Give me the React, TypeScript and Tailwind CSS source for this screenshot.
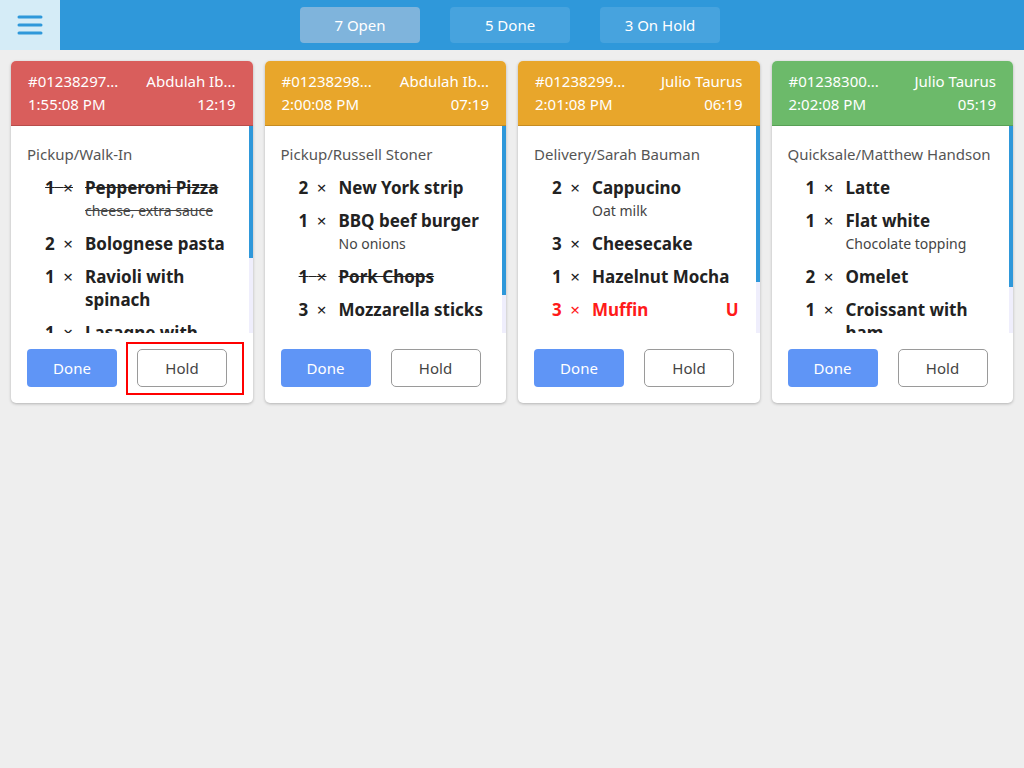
import type { ReactNode } from 'react';

type Item = {
  qty: number;
  name: string;
  note?: string;
  done?: boolean;
  urgent?: boolean;
};

type Order = {
  id: string;
  customer: string;
  time: string;
  elapsed: string;
  color: string;
  source: string;
  thumb: number;
  items: Item[];
};

const orders: Order[] = [
  {
    id: '#01238297...',
    customer: 'Abdulah Ib...',
    time: '1:55:08 PM',
    elapsed: '12:19',
    color: 'bg-[#d95e5c] border-[#b84d4b]',
    source: 'Pickup/Walk-In',
    thumb: 132,
    items: [
      { qty: 1, name: 'Pepperoni Pizza', note: 'cheese, extra sauce', done: true },
      { qty: 2, name: 'Bolognese pasta' },
      { qty: 1, name: 'Ravioli with spinach' },
      { qty: 1, name: 'Lasagne with beef' },
    ],
  },
  {
    id: '#01238298...',
    customer: 'Abdulah Ib...',
    time: '2:00:08 PM',
    elapsed: '07:19',
    color: 'bg-[#e8a62b] border-[#c68c22]',
    source: 'Pickup/Russell Stoner',
    thumb: 169,
    items: [
      { qty: 2, name: 'New York strip' },
      { qty: 1, name: 'BBQ beef burger', note: 'No onions' },
      { qty: 1, name: 'Pork Chops', done: true },
      { qty: 3, name: 'Mozzarella sticks' },
    ],
  },
  {
    id: '#01238299...',
    customer: 'Julio Taurus',
    time: '2:01:08 PM',
    elapsed: '06:19',
    color: 'bg-[#e8a62b] border-[#c68c22]',
    source: 'Delivery/Sarah Bauman',
    thumb: 156,
    items: [
      { qty: 2, name: 'Cappucino', note: 'Oat milk' },
      { qty: 3, name: 'Cheesecake' },
      { qty: 1, name: 'Hazelnut Mocha' },
      { qty: 3, name: 'Muffin', urgent: true },
    ],
  },
  {
    id: '#01238300...',
    customer: 'Julio Taurus',
    time: '2:02:08 PM',
    elapsed: '05:19',
    color: 'bg-[#6cba6a] border-[#58a056]',
    source: 'Quicksale/Matthew Handson',
    thumb: 161,
    items: [
      { qty: 1, name: 'Latte' },
      { qty: 1, name: 'Flat white', note: 'Chocolate topping' },
      { qty: 2, name: 'Omelet' },
      { qty: 1, name: 'Croissant with ham' },
    ],
  },
];

function Tab({ children, active }: { children: ReactNode; active?: boolean }) {
  return (
    <button
      className={`h-9 w-[120px] rounded-[4px] text-[15px] text-white ${
        active ? 'bg-[#7fb4dc]' : 'bg-[#47a3de]'
      }`}
    >
      {children}
    </button>
  );
}

function OrderCard({ order, highlightHold }: { order: Order; highlightHold?: boolean }) {
  return (
    <div className="flex flex-col overflow-hidden rounded-[5px] bg-white shadow-[0_1px_3px_rgba(0,0,0,0.25)]">
      <div className={`border-b px-[17px] pt-[9px] pb-[9px] text-[15px] leading-[23px] text-white ${order.color}`}>
        <div className="flex justify-between">
          <span>{order.id}</span>
          <span>{order.customer}</span>
        </div>
        <div className="flex justify-between">
          <span>{order.time}</span>
          <span>{order.elapsed}</span>
        </div>
      </div>

      <div className="relative h-[207px] overflow-hidden pl-4 pr-[21px] pt-[17px]">
        <div className="text-[15px] leading-[23px] text-[#555]">{order.source}</div>
        <div className="pt-[5px] pb-2">
          {order.items.map((item, i) => (
            <div
              key={i}
              className={`flex py-[5px] text-[17px] leading-[23px] font-bold ${
                item.urgent ? 'text-[#ff1a1a]' : 'text-[#222]'
              }`}
            >
              <div
                className={`w-[46px] shrink-0 text-right [word-spacing:4px] ${item.done ? 'line-through' : ''}`}
              >
                {item.qty} <span className="font-normal">×</span>
              </div>
              <div className="ml-3 min-w-0 flex-1">
                <div className={item.done ? 'line-through' : ''}>{item.name}</div>
                {item.note && (
                  <div className={`text-[14px] font-normal text-[#444] ${item.done ? 'line-through' : ''}`}>
                    {item.note}
                  </div>
                )}
              </div>
              {item.urgent && <div className="pl-2">U</div>}
            </div>
          ))}
        </div>
        {/* scrollbar */}
        <div className="absolute top-0 right-0 bottom-0 w-[4px] bg-[#efeefc]">
          <div className="w-full bg-[#2f98da]" style={{ height: order.thumb }} />
        </div>
      </div>

      <div className="flex gap-5 px-4 py-4">
        <button className="h-[38px] w-[90px] rounded-[4px] bg-[#5f95f6] text-[15px] text-white">Done</button>
        <div className="relative">
          <button className="h-[38px] w-[90px] rounded-[5px] border border-[#9a9a9a] bg-white text-[15px] text-[#444]">
            Hold
          </button>
          {highlightHold && (
            <div className="pointer-events-none absolute -top-[7px] -bottom-[8px] -left-[11px] -right-[17px] border-2 border-[#ff0000]" />
          )}
        </div>
      </div>
    </div>
  );
}

export default function App() {
  return (
    <div className="min-h-screen bg-[#eeeeee] font-['Noto_Sans',sans-serif]">
      <div className="flex h-[50px] items-center bg-[#2f98da]">
        <button className="flex h-[50px] w-[60px] items-center justify-center bg-[#d5ecf7]">
          <svg width="26" height="22" viewBox="0 0 26 22">
            <g stroke="#2f98da" strokeWidth="3" strokeLinecap="round">
              <line x1="2" y1="3" x2="24" y2="3" />
              <line x1="2" y1="11" x2="24" y2="11" />
              <line x1="2" y1="19" x2="24" y2="19" />
            </g>
          </svg>
        </button>
        <div className="ml-[240px] flex gap-[30px]">
          <Tab active>7 Open</Tab>
          <Tab>5 Done</Tab>
          <Tab>3 On Hold</Tab>
        </div>
      </div>

      <div className="grid grid-cols-4 gap-3 p-[11px]">
        {orders.map((o, i) => (
          <OrderCard key={o.id} order={o} highlightHold={i === 0} />
        ))}
      </div>
    </div>
  );
}
